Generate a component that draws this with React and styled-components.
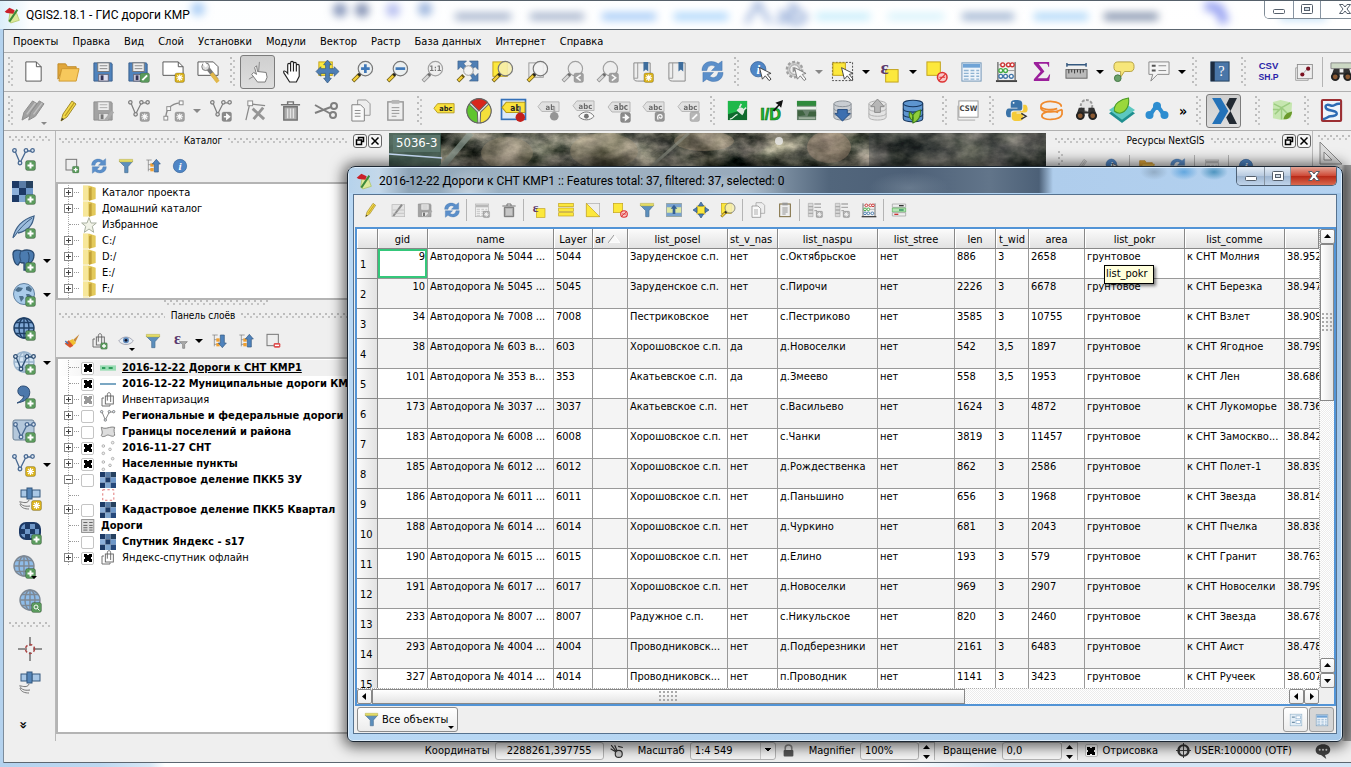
import React from "react";
import styled, { createGlobalStyle, css } from "styled-components";

const UI = `"DejaVu Sans Condensed", "DejaVu Sans", sans-serif`;
const TITLE = `Roboto, "Open Sans", sans-serif`;

const Global = createGlobalStyle`
  * { box-sizing: border-box; }
  html, body { margin: 0; padding: 0; }
  body { font-family: ${UI}; font-size: 11px; line-height: 14px; color: #000; overflow: hidden; background: #fff; }
  button, input, select { font-family: inherit; font-size: inherit; line-height: inherit; color: inherit; margin: 0; }
`;

/* ---------- icon drawings, 24 x 24 ---------- */

const Badge = ({ x = 13, y = 13, fill = "#5a9a5c", kind = "plus" }) => (
  <g transform={`translate(${x} ${y})`}>
    <rect x=".5" y=".5" width="10" height="10" rx="2" fill={fill} stroke="#0003" />
    {kind === "plus" && <path d="M5.5 2.5v6M2.5 5.5h6" stroke="#fff" strokeWidth="2" />}
    {kind === "star" && <path d="M5.5 2v7M2 5.5h7M3 3l5 5M8 3l-5 5" stroke="#fff" strokeWidth="1.2" />}
    {kind === "arrow" && <path d="M2.5 5.5h4M5.5 3l3 2.5-3 2.5z" stroke="#fff" strokeWidth="1.4" fill="#fff" />}
    {kind === "left" && <path d="M7.500 2.500l-4 3 4 3" stroke="#fff" strokeWidth="1.600" fill="none" />}
    {kind === "right" && <path d="M3.500 2.500l4 3-4 3" stroke="#fff" strokeWidth="1.600" fill="none" />}
    {kind === "pen" && <path d="M3 8l5-5" stroke="#fff" strokeWidth="2" />}
    {kind === "rot" && <path d="M4 8.500c-3-5 4-7 4-3 0 2-3 2-3 0" stroke="#fff" strokeWidth="1.300" fill="none" />}
    {kind === "find" && <><circle cx="5" cy="5" r="2" stroke="#fff" fill="none" /><path d="M6.500 6.500l2 2" stroke="#fff" /></>}
  </g>
);
const Star = (p) => <Badge fill="#d9b21c" kind="star" {...p} />;
const Lens = ({ fill = "#e8eef0aa", children }) => (
  <>
    <path d="M2 22l7-7" stroke="#6b5a12" strokeWidth="4" />
    <path d="M2.500 21.500l5-5" stroke="#f4cf3a" strokeWidth="2.400" />
    <path d="M8 16l2-2" stroke="#222" strokeWidth="3" />
    <circle cx="15" cy="9" r="7.500" fill={fill} stroke="#777" strokeWidth="1.200" />
    {children}
  </>
);
const Nodes = ({ x = 0, y = 0, c = "#4a6a92" }) => (
  <g transform={`translate(${x} ${y})`} stroke={c} fill="#dfe8f2" strokeWidth="1.300">
    <path d="M3 4l5 12 6-12h6" fill="none" />
    <circle cx="2.500" cy="3.500" r="1.800" /><circle cx="8" cy="16" r="1.800" />
    <circle cx="14" cy="3.500" r="1.800" /><circle cx="20.500" cy="3.500" r="1.800" />
  </g>
);
const Tag = ({ y = 4, t = "abc" }) => (
  <>
    <path d={`M1 ${y + 5}l4-5h18v10h-18z`} fill="#fbe23c" stroke="#b59a1c" />
    <text x="14" y={y + 8} textAnchor="middle" fontSize="8" fontWeight="700" fill="#222">{t}</text>
  </>
);
const Cursor = ({ x = 11, y = 8 }) => (
  <path transform={`translate(${x} ${y})`} d="M0 0l3 12 3-3.500 4 5 2-1.500-4-5 4-1z" fill="#fff" stroke="#444" />
);
const Disk = () => (
  <>
    <path d="M2 3h18l1 1v18H2z" fill="#4f83bd" stroke="#3a5f8c" />
    <rect x="6" y="3" width="12" height="9" fill="#eee" stroke="#777" /><path d="M8 6h8M8 9h8" stroke="#888" />
    <rect x="7" y="15" width="10" height="7" fill="#dde" stroke="#667" /><rect x="9" y="16" width="3" height="5" fill="#335" />
  </>
);
const PencilShape = ({ x = 0 }) => (
  <g transform={`translate(${x} 0)`}>
    <path d="M4 22l2-7 9-13 4 3-9 13z" fill="#f3d94a" stroke="#a08a2c" />
    <path d="M8 17l9-13" stroke="#b8991e" strokeWidth="1.300" /><path d="M4 22l1-3 2 1z" fill="#333" />
  </g>
);
const DarkPencil = ({ x = 0 }) => (
  <g transform={`translate(${x} 0)`}>
    <path d="M3 22l2-8 9-12 5 3-9 13z" fill="#777" stroke="#555" />
    <path d="M8 16l9-12" stroke="#aaa" strokeWidth="1.500" />
  </g>
);
const Book = () => (
  <><path d="M3 3h17v19H7c-3 0-4-1-4-3z" fill="#eee" stroke="#888" /><path d="M7 3v16H3" fill="none" stroke="#999" /><path d="M13 2h5v10l-2.500-2-2.500 2z" fill="#3e6d9c" /></>
);
const Checker = ({ s = 8, x = 0, y = 0 }) => {
  const tone = ["#1d3a66", "#5a7ca6", "#26415f", "#8db0da", "#1d3a66", "#6e97c8", "#1d3a66", "#7fa6d0", "#26497c"];
  return tone.map((c, i) => <rect key={i} x={x + (i % 3) * s} y={y + Math.floor(i / 3) * s} width={s} height={s} fill={c} />);
};
const Globe = ({ fill = "#a9cbe9", c = "#4c7199" }) => (
  <g fill="none" stroke={c} strokeWidth="1.400">
    <circle cx="12" cy="11" r="10" fill={fill} />
    <ellipse cx="12" cy="11" rx="5" ry="10" /><path d="M12 1v20M2 11h20M4 5.500h16M4 16.500h16" />
  </g>
);
const Drum = ({ c = "#8a9097", l = "#ddd" }) => (
  <g fill={l} stroke={c}>
    <path d="M3 5v14c0 4 18 4 18 0V5" /><path d="M3 10c0 4 18 4 18 0M3 15c0 4 18 4 18 0" fill="none" /><ellipse cx="12" cy="5" rx="9" ry="3" />
  </g>
);
const Binoc = () => (
  <>
    <path d="M4 9h6v4h4V9h6l3 9H14v-3h-4v3H1z" fill="#333" />
    <circle cx="5.500" cy="17.500" r="4.500" fill="#222" /><circle cx="18.500" cy="17.500" r="4.500" fill="#222" />
    <circle cx="5.500" cy="17.500" r="2.500" fill="#8b5a33" /><circle cx="18.500" cy="17.500" r="2.500" fill="#8b5a33" />
  </>
);
const Sheet = ({ head = "#6fa3d6", line = "#8fb3d2" }) => (
  <><rect x="2" y="3" width="20" height="19" fill="#eef4fa" stroke="#6f94b5" /><rect x="3" y="4" width="18" height="4" fill={head} />
    <path d="M4 11h5M11 11h4M17 11h3M4 14h5M11 14h4M17 14h3M4 17h5M11 17h4M17 17h3M4 20h5M11 20h4M17 20h3" stroke={line} strokeWidth="1.400" /></>
);
const Epsilon = ({ x = 7, y = 15, s = 20 }) => <text x={x} y={y} textAnchor="middle" fontFamily="Liberation Serif" fontSize={s} fontWeight="700" fill="#5b3a6e">ε</text>;
const NoEntry = () => <><circle cx="18" cy="18" r="5" fill="#f8c8c8" stroke="#d33" strokeWidth="1.600" /><path d="M14.500 21.500l7-7M15 18h6" stroke="#d33" strokeWidth="1.300" /></>;
const YSquare = ({ x = 2, y = 2, w = 14 }) => <rect x={x} y={y} width={w} height={w} fill="#fce83c" stroke="#c2a21a" />;
const Satellite = () => (
  <g fill="#a8c7e6" stroke="#34587f"><rect x="3" y="3" width="6" height="7" /><rect x="14" y="3" width="8" height="7" /><rect x="9" y="1" width="5" height="11" fill="#5585b8" />
    <path d="M11 13c-1 3-4 3-8 2M2 14c0 4 4 6 10 5M2 17c1 4 5 5 9 5" fill="none" stroke="#777" /></g>
);
const Page = ({ d = "M4 2h11l5 5v15H4z" }) => <><path d={d} fill="#fff" stroke="#555" /><path d="M15 2v5h5" fill="none" stroke="#555" /></>;
const Clip = () => <><rect x="4" y="3" width="16" height="19" fill="#eee" stroke="#7c6a3c" strokeWidth="1.500" /><rect x="8" y="1" width="8" height="4" fill="#999" /><path d="M8 9h8M8 12h8M8 15h8M8 18h5" stroke="#666" /></>;
const Refresh = () => (
  <g fill="#5b8fca" stroke="#3f6fa8" strokeWidth=".500"><path d="M1 11C1 2 11-1 18 4l4-3v10H11l4-4c-4-3-8-1-9 4z" /><path d="M23 13c0 9-10 12-17 7l-4 3V13h11l-4 4c4 3 8 1 9-4z" /></g>
);
const Funnel = () => <><path d="M2 5h20l-7 8v9h-5v-9z" fill="#5c8fbd" stroke="#4a6f92" /><path d="M2 2h20v4H2z" fill="#e3dc66" stroke="#a8a040" strokeWidth=".600" /></>;
const Info = () => <><circle cx="12" cy="12" r="10" fill="#4f86c6" stroke="#356299" /><text x="12" y="18" textAnchor="middle" fontFamily="Liberation Serif" fontStyle="italic" fontWeight="700" fontSize="17" fill="#fff">i</text></>;
const Abacus = () => (
  <><path d="M3 2v19M21 2v19" stroke="#777" strokeWidth="1.500" /><path d="M1 22h22" stroke="#444" strokeWidth="2" />
    <path d="M3 5h18M3 11h18M3 17h18" stroke="#999" />
    <g fill="#fff" strokeWidth="1.400"><g stroke="#c33"><circle cx="8" cy="5" r="2" /><circle cx="14" cy="5" r="2" /><circle cx="18" cy="5" r="2" /></g>
      <g stroke="#4a4"><circle cx="6" cy="11" r="2" /><circle cx="11" cy="11" r="2" /></g>
      <g stroke="#47a"><circle cx="6" cy="17" r="2" /><circle cx="11" cy="17" r="2" /><circle cx="17" cy="17" r="2" /></g></g></>
);
const Arrows4 = () => <path d="M12 0l4 5h-2v4h5V7l5 5-5 5v-3h-5v5h2l-4 5-4-5h2v-5H5v3l-5-5 5-5v2h5V5H8z" fill="#4f7fb5" stroke="#2c527d" strokeWidth=".700" />;
const Group = () => <g fill="none" stroke="#666" strokeWidth="1.400"><rect x="8" y="6" width="12" height="12" /><path d="M6 9H3v12h12v-2" /><path d="M11 13V4c0-4 5-4 5 0v11" /></g>;
const TreeIco = ({ up }) => (
  <><path d="M2 3h8M5 3v17M5 10h4M5 17h4" stroke="#777" fill="none" /><rect x="8" y="8" width="5" height="5" fill="#f0a030" /><rect x="8" y="15" width="5" height="5" fill="#f0a030" />
    <path d={up ? "M17 2l6 7h-3v12h-6V9h-3z" : "M17 22l6-7h-3V3h-6v12h-3z"} fill="#4f83bd" stroke="#34587f" /></>
);

const ICONS = {
  newDoc: <Page />,
  open: <><path d="M1 4h8l2 3h9v4H5L1 20z" fill="#e0a63a" stroke="#c08a28" /><path d="M5 9h18l-3 13H2z" fill="#f7c85c" stroke="#d09a30" /></>,
  save: <Disk />,
  saveAs: <><Disk /><Badge kind="pen" /></>,
  composer: <><path d="M1 2h16l5 5v9H1z" fill="#fff" stroke="#555" /><path d="M17 2v5h5" fill="none" stroke="#555" /><Star /></>,
  composers: <><path d="M1 2h16l5 5v9H1z" fill="#fff" stroke="#555" /><path d="M10 7l11 14" stroke="#777" strokeWidth="4" /><path d="M15 14l7 9" stroke="#e2b84a" strokeWidth="4" /><circle cx="9" cy="7" r="4" fill="#ddd" stroke="#777" /><path d="M7 3l3 4" stroke="#fff" strokeWidth="3" /></>,
  touch: <><path d="M3 20l10-6 1-12" stroke="#888" fill="none" /><path d="M9 8l2 7-3-2-2 2 6 8h8l2-5-1-5-9-1-1-6z" fill="#fff" stroke="#777" /></>,
  hand: <path d="M7 14V5c0-2 3-2 3 0V3c0-2 3-2 3 0v1c0-2 3-2 3 0v2c0-2 3-2 3 0v11l-3 6H9l-5-8c-3-4 0-5 3-1zM10 5v7M13 4v8M16 6v6" fill="#fff" stroke="#222" strokeWidth="1.200" />,
  pan: <><YSquare x={3} y={2} w={14} /><Arrows4 /></>,
  zoomIn: <Lens><path d="M15 4.500v9M10.500 9h9" stroke="#3f78b8" strokeWidth="2.800" /></Lens>,
  zoomOut: <Lens><path d="M10 9h10" stroke="#3f78b8" strokeWidth="2.800" /></Lens>,
  zoomOne: <Lens><text x="15" y="12" fontSize="8" fontWeight="700" textAnchor="middle" fill="#333">1:1</text></Lens>,
  zoomFull: <><path d="M2 1h9L8 4l3 3-3 3-3-3-3 3zM23 1v9l-3-3-4 3-2-3 3-3-3-3zM23 22h-9l3-3-2-3 3-2 2 3 3-3z" fill="#4f7fb5" stroke="#34587f" strokeWidth=".600" />
    <path d="M2 22l6-6" stroke="#6b5a12" strokeWidth="4" /><path d="M2.500 21.500l4-4" stroke="#f4cf3a" strokeWidth="2.400" /><circle cx="13" cy="11" r="5" fill="#f2f2f2" stroke="#999" /></>,
  zoomSel: <><YSquare x={2} y={2} w={15} /><Lens fill="#f6efb0dd" /></>,
  zoomLayer: <><rect x="3" y="3" width="15" height="15" fill="#eee" stroke="#999" /><Lens fill="#f2f2f2dd" /></>,
  zoomLast: <><Lens /><Badge kind="left" fill="#777" /></>,
  zoomNext: <><Lens /><Badge kind="right" fill="#777" /></>,
  bookNew: <><Book /><Star /></>,
  book: <Book />,
  refresh: <Refresh />,
  identify: <><g transform="scale(.8)"><Info /></g><Cursor /></>,
  action: <><circle cx="11" cy="10" r="8" fill="#bbb" stroke="#777" strokeWidth="2.500" strokeDasharray="3 2" /><circle cx="11" cy="10" r="5" fill="#eee" stroke="#777" /><path d="M9 7l5 3-5 3z" fill="#666" /><Cursor /></>,
  select: <><rect x="1.500" y="2.500" width="21" height="19" fill="none" stroke="#444" strokeDasharray="2 1.500" /><YSquare x={2} y={3} w={13} /><Cursor /></>,
  exprSelect: <><YSquare x={8} y={10} w={13} /><Epsilon /></>,
  deselect: <><YSquare /><NoEntry /></>,
  table: <Sheet />,
  abacus: <Abacus />,
  sigma: <path d="M4 2h16v5h-1c0-3-2-3-4-3H9l6 8-7 7h8c2 0 3-1 4-4h1l-1 7H4v-2l7-8-7-8z" fill="#9b1f9b" />,
  ruler: <><path d="M2 5h20M2 3v4M22 3v4" stroke="#34587f" strokeWidth="1.500" /><rect x="1" y="10" width="22" height="9" fill="#bbb" stroke="#666" /><path d="M4 10v4M7 10v3M10 10v4M13 10v3M16 10v4M19 10v3" stroke="#333" /></>,
  tip: <><path d="M6 2h13c3 0 4 2 4 5s-1 5-4 5h-6l-4 6v-6H6c-3 0-4-2-4-5s1-5 4-5z" fill="#f7e67a" stroke="#b5a040" /><circle cx="6" cy="19" r="3.500" fill="#6aa06a" stroke="#467846" /></>,
  annot: <><path d="M2 2h21v13H11l-7 7 2-7H2z" fill="#f5f5f5" stroke="#888" /><path d="M5 6h4M5 11h4" stroke="#555" strokeWidth="2" /><path d="M12 6h8M12 11h8" stroke="#888" /></>,
  help: <><rect x="3" y="2" width="19" height="20" fill="#4a76a8" stroke="#24405f" /><rect x="3" y="2" width="4" height="20" fill="#1d2c40" /><text x="14" y="17" fontFamily="Liberation Serif" fontSize="15" textAnchor="middle" fill="#fff">?</text></>,
  csvshp: <><text x="12" y="9" fontSize="10" textAnchor="middle" fill="#2a1fa8" fontFamily="Liberation Sans" fontWeight="700">CSV</text><text x="12" y="21" fontSize="9" textAnchor="middle" fill="#2a1fa8" fontFamily="Liberation Sans" fontWeight="700">SH.P</text></>,
  scatter: <><path d="M4 7H2v15h15v-2" fill="none" stroke="#999" /><rect x="4" y="3" width="18" height="17" fill="#eee" stroke="#888" /><path d="M10 15l6-7" stroke="#999" /><circle cx="10" cy="15" r="2.500" fill="#7a1020" /><circle cx="17" cy="8" r="2.500" fill="#7a1020" /></>,
  binoc: <><path d="M1 3h22v6H1z" fill="#ccd8c4" stroke="#888" /><Binoc /></>,
  pens: <><DarkPencil x={-3} /><DarkPencil x={4} /></>,
  pencil: <PencilShape />,
  savePen: <><Disk /><path d="M14 22l8-9" stroke="#888" strokeWidth="3" /></>,
  addFeat: <><Nodes x={1} c="#444" /><Badge kind="star" fill="#777" /></>,
  curve: <><path d="M4 20C4 10 9 5 19 4" fill="none" stroke="#555" strokeWidth="1.400" /><rect x="2" y="18" width="4" height="4" fill="#fff" stroke="#555" /><rect x="5" y="8" width="4" height="4" fill="#fff" stroke="#555" /><rect x="18" y="2" width="4" height="4" fill="#fff" stroke="#555" /><Badge kind="star" fill="#777" /></>,
  moveFeat: <><Nodes x={1} c="#444" /><Badge kind="arrow" fill="#555" /></>,
  node: <><path d="M2 22L6 5l16 2" fill="none" stroke="#555" strokeWidth="1.300" /><rect x="4" y="2" width="5" height="5" fill="#fff" stroke="#555" /><path d="M9 10l12 11M20 9L10 21" stroke="#666" strokeWidth="3" /></>,
  trash: <g fill="none" stroke="#333" strokeWidth="1.500"><path d="M2 6h20M9 6V3h6v3" /><path d="M5 8h14v14H5z" fill="#888" /><path d="M9 10v10M12 10v10M15 10v10" stroke="#ddd" /></g>,
  cut: <g stroke="#444" fill="none" strokeWidth="2"><path d="M1 6l16 9M1 14l16-6" /><circle cx="19" cy="16" r="3" /><circle cx="20" cy="7" r="3" /></g>,
  copy: <><path d="M9 1h9l4 4v12H9z" fill="#eee" stroke="#666" /><path d="M3 6h9l4 4v13H3z" fill="#fff" stroke="#444" /><path d="M6 12h6M6 15h6M6 18h6" stroke="#555" /></>,
  paste: <Clip />,
  label: <Tag />,
  pie: <g stroke="#666"><circle cx="12" cy="12" r="11" fill="#fff" /><path d="M12 12L4 4a11 11 0 0 1 16 0z" fill="#d9261c" /><path d="M13.500 13L21 5.500A11 11 0 0 1 13 23z" fill="#f4e03a" /><path d="M10.500 13L3 5.500A11 11 0 0 0 11 23z" fill="#5fc52e" /></g>,
  labelPin: <><rect x="0.500" y="1.500" width="23" height="19" fill="#dce9f8" stroke="#3470b8" strokeWidth="1.600" /><Tag t="ab" /><path d="M18 8v9" stroke="#888" strokeWidth="2" /><circle cx="18.500" cy="18.500" r="4.500" fill="#c4201c" /></>,
  labelPin2: <><Tag y={3} t="ab" /><path d="M18 8v9" stroke="#888" strokeWidth="2" /><circle cx="18" cy="18" r="4.500" fill="#666" /></>,
  labelEye: <><Tag y={2} /><path d="M7 18c4-6 12-6 16 0-4 5-12 5-16 0z" fill="#fff" stroke="#333" /><circle cx="15" cy="18" r="2.500" fill="#333" /></>,
  labelMove: <><Tag y={3} /><Badge kind="arrow" fill="#555" /></>,
  labelRot: <><Tag y={3} /><Badge kind="rot" fill="#666" /></>,
  labelEdit: <><Tag y={3} /><Badge kind="pen" fill="#999" /></>,
  plug: <><rect x="2" y="2" width="20" height="20" fill="#0f6b2d" /><path d="M2 2h20v8L2 16z" fill="#1eb84a" /><path d="M4 21c4 0 4-4 8-5" stroke="#eaf5ea" strokeWidth="1.300" fill="none" /><path d="M11 12l6 5c2-2 3-5 1-7s-5-1-7 2z" fill="#dfe8e0" /><path d="M14 9l2-4M18 12l3-3" stroke="#dfe8e0" strokeWidth="1.600" /></>,
  id: <><text x="10" y="22" textAnchor="middle" fontFamily="Liberation Sans" fontSize="17" fontWeight="700" fill="#1db52e" stroke="#0c6b18" strokeWidth=".600">I/D</text><path d="M12 12l6-6-3-2 8-3-2 8-2-2-5 6z" fill="#111" /></>,
  train: <><rect x="1" y="2" width="20" height="20" fill="#67806b" /><path d="M1 2h20v5H1z" fill="#2f8b3c" /><path d="M1 8h20v3H1z" fill="#e8efe8" /><path d="M2 12h5l3 5-8 1zM14 13h7v5h-9z" fill="#3f6340" /><path d="M3 19h17v2H3z" fill="#9db09d" /></>,
  dbDown: <><Drum l="#c9cdd2" /><path d="M7 11h10v4h3l-8 8-8-8h3z" fill="#3d6fb0" stroke="#244a7d" /></>,
  dbUp: <><Drum /><path d="M12 0l7 8h-4v6H9V8H5z" fill="#999" stroke="#555" /></>,
  dbLeaf: <><Drum c="#16355c" l="#5d95cf" /><path d="M12 23c-2-8 2-11 7-12 0 7-2 10-7 12zM12 21c-4-2-4-6-3-8 3 2 4 4 3 8z" fill="#8fce3a" stroke="#3d7a1c" /></>,
  csw: <><path d="M2 7v15h18" fill="none" stroke="#aaa" /><rect x="3" y="2" width="20" height="17" fill="#fff" stroke="#999" /><text x="13" y="13" fontSize="8" fontWeight="700" textAnchor="middle" fill="#444">CSW</text></>,
  python: <><path d="M12 1c-5 0-6 1-6 5v3h7v1H4c-4 0-4 9 0 9h2v-4c0-3 2-3 4-3h5c2 0 3-1 3-3V5c0-3-2-4-6-4z" fill="#3b73a8" /><path d="M13 23c5 0 6-1 6-5v-3h-7v-1h9c4 0 3-8 0-8h-2v4c0 3-2 3-4 3h-5c-2 0-3 1-3 3v3c0 3 2 4 6 4z" fill="#f5cb3a" /><circle cx="9" cy="4" r="1" fill="#fff" /><path d="M17 15l5 3-5 3" fill="none" stroke="#333" strokeWidth="1.500" /></>,
  rings: <g fill="none" stroke="#f08a2c" strokeWidth="1.800"><path d="M22 8c2-6-20-8-21-1-1 4 10 5 17 3M1 7v3c1 4 14 5 22 1M23 11v5c-2 7-22 7-21 1 1-4 12-5 17-3" /></g>,
  binocGear: <><circle cx="12" cy="7" r="6" fill="#e4e4e4" stroke="#999" strokeDasharray="3 1.500" strokeWidth="2" /><Binoc /></>,
  leafBox: <><path d="M12 6l12 8-12 9-12-9z" fill="#1f8f8f" /><path d="M12 3l12 8-12 9L0 11z" fill="#5cc8c0" /><path d="M5 12C4 5 11 1 18 0c1 7-2 13-8 14-2 0-4-1-5-2z" fill="#9ad83c" stroke="#4a9a28" /></>,
  share: <><path d="M5 16l7-10 7 10" stroke="#2d8dd0" strokeWidth="4" fill="none" /><circle cx="12" cy="7" r="4" fill="#2d8dd0" /><circle cx="4.500" cy="16" r="4" fill="#2d8dd0" /><circle cx="19.500" cy="16" r="4" fill="#2d8dd0" /></>,
  bigX: <><path d="M1 0h8l7 12-7 12H1l7-12z" fill="#2472b8" /><path d="M24 0h-7l-3 6 4 6-4 6 3 6h7l-6-12z" fill="#222a33" /></>,
  greenMap: <><path d="M2 3l8-2 12 3-1 16-10 2-9-2z" fill="#c6e6b0" /><path d="M3 5l8 4 9-5M4 16l7-7 9 9M11 9v12M2 11h6" stroke="#9ccc80" strokeWidth="1.500" fill="none" /><path d="M13 21c1-5 4-7 9-8 0 5-4 9-9 8z" fill="#6b9a2c" /></>,
  route: <><rect x="2" y="1" width="20" height="22" rx="1" fill="#eef4fb" stroke="#9c2f33" strokeWidth="2.200" /><path d="M21 5c-5-1-6 3-9 2S5 5 6 9s9 2 11 5-3 4-6 4-4 3-8 3" fill="none" stroke="#2c6ab4" strokeWidth="2.600" /></>,
  addVector: <><Nodes /><Badge /></>,
  addRaster: <><Checker s={7} /><Badge /></>,
  feather: <><path d="M1 23C3 13 9 5 22 1c-1 9-6 15-16 17" fill="#9dbddd" stroke="#3d5f86" strokeWidth="1.300" /><path d="M2 22C7 14 13 8 20 3" fill="none" stroke="#3d5f86" /><Badge /></>,
  elephant: <><path d="M1 5c0-5 6-4 9-3 5-2 12-1 12 4 0 4-2 8-5 8l-1 7h-4v-7c-2 0-3 0-4-1l-2 3c-3 0-5-6-5-11z" fill="#4c7cb0" stroke="#294a70" strokeWidth="1.300" /><path d="M9 2c-2 4-1 8 0 10M16 3c2 4 1 8 0 11" fill="none" stroke="#294a70" /><Badge /></>,
  wms: <><circle cx="12" cy="11" r="10.500" fill="#a9cbe9" stroke="#5f7fa0" /><path d="M3 7l3-3 5 1-2 3-3 1-2-1zM14 4l3-1 3 3-1 3-5-2zM7 13l4 0 1 2-3 4-1-3zM14 11l3 0 3 2-3 4-2-3z" fill="#4c6f8c" /><Badge /></>,
  wcs: <><Globe fill="#7fa8d6" c="#1f3f66" /><Badge /></>,
  wfs: <><Globe fill="#d6e6f4" c="#9ab4cc" /><Nodes x={1} y={2} c="#2f4f74" /><Badge /></>,
  comma: <><path d="M11 1c6 0 8 5 6 10-2 4-6 6-12 7 4-2 6-4 7-7-8 1-8-10-1-10z" fill="#4c78ab" stroke="#2c4c74" /><Badge /></>,
  virtual: <><rect x="1" y="1" width="21" height="20" rx="2" fill="#b4c8dc" stroke="#6d8296" /><Nodes x={1} y={2} /><Badge /></>,
  newVector: <><Nodes /><Star /></>,
  sat: <Satellite />,
  satStar: <><Satellite /><Star /></>,
  rasterAdd: <><rect x="2" y="2" width="20" height="16" rx="6" fill="#6e97c8" stroke="#1d3a66" strokeWidth="2" /><path d="M7 3h5v5H7zM12 8h5v5h-5zM7 13h5v4H7zM3 8h4v5H3zM17 3h4v5h-4z" fill="#1d3a66" /><Badge /></>,
  globeAdd: <><Globe fill="#8fbce8" c="#7d8894" /><Badge /></>,
  globeFind: <><Globe fill="#8fbce8" c="#7d8894" /><Badge kind="find" /></>,
  cross: <><path d="M12 0v9M12 15v9M0 12h9M15 12h9" stroke="#333" /><circle cx="12" cy="12" r="4.500" fill="none" stroke="#a44" strokeDasharray="3 2" strokeWidth="1.500" /></>,
  addSel: <><rect x="3" y="2" width="16" height="16" fill="#eee" stroke="#777" strokeWidth="1.500" /><Badge x={12} y={12} /></>,
  remove: <><rect x="3" y="2" width="17" height="17" fill="#eee" stroke="#777" strokeWidth="1.500" /><rect x="13" y="15" width="10" height="7" rx="2" fill="#e05050" /><path d="M15 18.500h6" stroke="#fff" strokeWidth="2" /></>,
  funnel: <Funnel />,
  treeUp: <TreeIco up />,
  treeDown: <TreeIco />,
  info: <Info />,
  brush: <><path d="M23 2l-9 8 3 4z" fill="#c88a3a" /><path d="M13 9l5 6-5 4-6-7z" fill="#f0c030" /><path d="M7 11l7 8-5 3-8-6z" fill="#d8542c" /><path d="M2 12l4 4" stroke="#3f78b8" strokeWidth="2" /></>,
  groupAdd: <><Group /><Badge x={14} y={14} /></>,
  group: <Group />,
  eye: <><path d="M1 12c6-8 16-8 22 0-6 7-16 7-22 0z" fill="#e8eef4" stroke="#889" /><circle cx="12" cy="11" r="4.500" fill="#5c88bb" /><circle cx="12" cy="11" r="2" fill="#112" /></>,
  epsFilter: <><Epsilon x={8} y={16} s={24} /><path d="M11 13h12l-4 4v6h-3v-6z" fill="#aaa" stroke="#777" /></>,
  checker: <Checker />,
  line: <path d="M0 12h24" stroke="#3a7ca5" strokeWidth="2" />,
  greenLine: <><path d="M0 12h24" stroke="#9adcb4" strokeWidth="8" /><path d="M3 12h5M13 12h6" stroke="#2f9e5c" strokeWidth="3" /></>,
  vnodes: <Nodes c="#777" y={2} />,
  polygon: <path d="M2 5c8 4 12-2 20 0-2 5 0 8 0 12-4 4-8-2-12 0-3 2-8 3-8 0 3-5 0-8 0-12z" fill="#ddd" stroke="#777" strokeWidth="1.400" />,
  points: <g fill="#eee" stroke="#999"><circle cx="19" cy="4" r="2" /><circle cx="5" cy="9" r="2" /><circle cx="15" cy="14" r="2" /><circle cx="5" cy="20" r="2" /></g>,
  redBox: <rect x="3" y="3" width="19" height="18" fill="none" stroke="#d66" strokeDasharray="4 4" strokeWidth="1.500" />,
  grayTable: <><rect x="1" y="1" width="21" height="22" fill="#ddd" stroke="#888" strokeWidth="1.500" /><path d="M4 6h7M14 6h6M4 11h7M14 11h6M4 15h7M14 15h6M4 19h7M14 19h6" stroke="#555" strokeWidth="1.500" /></>,
  folder: <><path d="M3 1h10l9 3v17l-4 1-3 1H3z" fill="#e3c95a" /><path d="M3 1h8v22H3z" fill="#f7e79a" /><path d="M12 5l4-2v19l-4 2z" fill="#c2a23a" /></>,
  starOff: <path d="M12 1l3 8h8l-6 5 2 9-7-5-7 5 2-9-6-5h8z" fill="#f1f3e8" stroke="#a9b0a0" strokeWidth="1.500" />,
  editSheet: <><rect x="3" y="4" width="19" height="18" fill="#ddd" stroke="#999" /><path d="M5 21L18 4" stroke="#555" strokeWidth="3" /><path d="M4 12h17M4 17h17" stroke="#999" /></>,
  rows: <g fill="#fce83c" stroke="#c2a21a"><rect x="1" y="2" width="22" height="5" /><rect x="1" y="9" width="22" height="5" /><rect x="1" y="16" width="22" height="5" /></g>,
  invert: <><rect x="2" y="2" width="20" height="20" fill="#eee" stroke="#aaa" /><path d="M2 2v20h20z" fill="#fce83c" stroke="#c2a21a" /></>,
  moveTop: <><rect x="1" y="2" width="22" height="20" fill="#dce6a0" stroke="#789" /><path d="M1 3h22v5H1zM1 16h22v5H1z" fill="#79a3cf" /><path d="M12 4l5 6h-3v8h-4v-8H7z" fill="#335f94" /></>,
  panGrid: <><YSquare x={6} y={6} w={12} /><path d="M12 0l4 6H8zM12 24l4-6H8zM0 12l6-4v8zM24 12l-6-4v8z" fill="#4f7fb5" stroke="#2c527d" /></>,
  colAdd: <><path d="M2 2h7v20H2z" fill="#ccc" stroke="#888" /><path d="M2 7h7M2 12h7M2 17h7M11 3h10M11 8h10M11 13h4" stroke="#888" strokeWidth="2" /><Badge kind="star" fill="#888" /></>,
  tableStar: <><Sheet /><Badge kind="star" fill="#888" /></>,
  cond: <><path d="M2 3h20v5H2z" fill="#eee" stroke="#999" /><path d="M12 5.500h7" stroke="#333" strokeWidth="2" /><path d="M2 9h20v6H2z" fill="#b4e4b4" stroke="#5a5" /><path d="M12 12h7" stroke="#285" strokeWidth="2" /><path d="M2 16h20v5H2z" fill="#eee" stroke="#999" /><path d="M5 18.500h6" stroke="#c33" strokeWidth="2" /></>,
  form: <><rect x="2" y="2" width="20" height="20" fill="#e4eef6" stroke="#8fb0c8" /><path d="M5 7h5M5 16h5" stroke="#7090a8" strokeWidth="2" /><rect x="12" y="5" width="8" height="5" fill="#fff" stroke="#7da5c8" /><rect x="12" y="13" width="8" height="5" fill="#fff" stroke="#7da5c8" /></>,
  app: <><path d="M9 8l9-1 5 13-13 4-3-3z" fill="#dcea9a" stroke="#a8bf58" /><path d="M8 22L20 4" stroke="#3c8a3c" strokeWidth="3" /><path d="M1 7l7-6 8 4-2 5-10-1z" fill="#c9202a" /></>,
  mouse: <g stroke="#333" fill="none" strokeWidth="2"><ellipse cx="15" cy="17" rx="6" ry="6" fill="#ccc" /><path d="M2 2l9 11M8 2l4 9M1 8l8 5M14 4l8 2" /></g>,
  lock: <><path d="M6 12V7c0-7 12-7 12 0v5" fill="none" stroke="#888" strokeWidth="3" /><rect x="3" y="11" width="18" height="12" rx="2" fill="#555" /></>,
  crs: <><circle cx="12" cy="12" r="8.500" fill="#ddd" stroke="#333" strokeWidth="3" /><path d="M12 0v24M0 12h24M7 5c-2 5-2 9 0 14M17 5c2 5 2 9 0 14" stroke="#333" fill="none" strokeWidth="1.500" /></>,
  chat: <><path d="M12 2c14 0 14 15 3 16l2 6-8-6C-3 17-1 2 12 2z" fill="#444" /><circle cx="7" cy="10" r="1.500" fill="#ddd" /><circle cx="12" cy="10" r="1.500" fill="#ddd" /><circle cx="17" cy="10" r="1.500" fill="#ddd" /></>,
  setSquare: <><path d="M2 1v22h22z" fill="#ddd" stroke="#888" /><path d="M6 11v8h8z" fill="#f0f0f0" stroke="#888" /></>,
};

const Svg = styled.svg`
  display: block;
  flex: none;
  overflow: visible;
  width: ${(p) => p.$s}px;
  height: ${(p) => p.$s}px;
  font-family: ${UI};
  ${(p) => p.$dim && css`filter: grayscale(1); opacity: 0.65;`}
`;
const Icon = ({ n, s = 24, dim }) => <Svg viewBox="0 0 24 24" $s={s} $dim={dim} aria-hidden="true">{ICONS[n]}</Svg>;

/* ---------- shared parts ---------- */

const gripDots = css`
  background: radial-gradient(circle at 1px 1px, #bcbcbc 1px, transparent 1px) 0 0 / 6px 6px,
    radial-gradient(circle at 4px 4px, #c4c4c4 1px, transparent 1px) 0 0 / 6px 6px;
`;
const GripV = styled.span`
  flex: none;
  width: ${(p) => p.$w || 14}px;
  height: 30px;
  padding: 0 4px;
  &::before {
    content: "";
    display: block;
    width: 6px;
    height: 100%;
    ${gripDots}
  }
`;
const GripH = styled.span`
  flex: ${(p) => (p.$w ? "none" : "1")};
  width: ${(p) => (p.$w ? p.$w + "px" : "auto")};
  height: 6px;
  ${gripDots}
`;
const Caret = styled.span`
  flex: none;
  width: 0;
  height: 0;
  border: ${(p) => p.$s || 4}px solid transparent;
  border-bottom-width: 0;
  border-top-color: ${(p) => (p.$dim ? "#888" : "#000")};
`;
const ToolButton = styled.button`
  display: flex;
  align-items: center;
  justify-content: center;
  flex: none;
  position: relative;
  width: ${(p) => p.$w || 35}px;
  height: ${(p) => p.$h || 34}px;
  padding: 0;
  background: none;
  border: 1px solid transparent;
  border-radius: 3px;
  ${(p) => p.$on && css`background: linear-gradient(#cfcfcf, #dedede); border-color: #7c7c7c;`}
`;
const ArrowButton = styled.button`
  display: flex;
  align-items: center;
  justify-content: center;
  flex: none;
  width: 12px;
  height: 24px;
  padding: 0;
  border: 0;
  background: none;
`;
const CornerCaret = styled(Caret)`
  position: absolute;
  right: 3px;
  bottom: 2px;
`;
const Separator = styled.span`
  flex: none;
  width: 1px;
  height: ${(p) => p.$h || 30}px;
  margin: 0 1px;
  background: #b4b4b4;
`;

/* ---------- main window ---------- */

const Frame = styled.div`
  position: relative;
  display: flex;
  flex-direction: column;
  min-height: 100vh;
  padding: 0 0 4px 4px;
  overflow: hidden;
  border-top: 1px solid #55606a;
  background: linear-gradient(90deg, #b4d2ee 0, #bdd8f0 100px, #d8e8f6 150px, #fff 165px, #fff 900px, #d4e6f6 1000px);
`;
const TitleBar = styled.header`
  position: relative;
  display: flex;
  align-items: center;
  height: 28px;
  margin-left: -4px;
  padding-left: 4px;
  background: linear-gradient(90deg, #dceffa 0, #fdfeff 30px, #fff);
  overflow: hidden;
`;
const Backdrop = styled.svg`
  position: absolute;
  inset: 0;
  width: 100%;
  height: 100%;
`;
const AppTitle = styled.h1`
  position: relative;
  margin: 0 0 0 6px;
  font: 400 12px/20px ${TITLE};
`;
const WinButtons = styled.div`
  position: absolute;
  top: ${(p) => (p.$dialog ? 0 : -1)}px;
  right: ${(p) => (p.$dialog ? 5 : -18)}px;
  display: flex;
  height: 19px;
  border: 1px solid ${(p) => (p.$dialog ? "#4f6175" : "#7f8b96")};
  border-top: 0;
  border-radius: 0 0 5px 5px;
  overflow: hidden;
`;
const WinButton = styled.button`
  display: flex;
  align-items: center;
  justify-content: center;
  width: ${(p) => p.$w}px;
  padding: 0;
  border: 0;
  border-left: ${(p) => (p.$first ? 0 : 1)}px solid #8794a2;
  background: ${(p) => (p.$red ? "linear-gradient(#e3a596, #cf4b38 48%, #b82a18 52%, #d9694e)" : p.$glass ? "linear-gradient(#e6eef7, #b9cbe0 48%, #9fb6d1 52%, #c0d4ea)" : "#fff")};
`;
const WinGlyph = ({ kind }) => (
  <svg width="14" height="12" viewBox="0 0 14 12" aria-hidden="true">
    {kind === "min" && <rect x="1.500" y="6.500" width="11" height="4" rx="1" fill="#fff" stroke="#555f6b" />}
    {kind === "max" && <><rect x="1.500" y="1.500" width="11" height="9" rx="1" fill="#fff" stroke="#555f6b" /><rect x="4.500" y="4.500" width="5" height="3" fill="#cfd9e4" stroke="#555f6b" /></>}
    {kind === "close" && <path d="M1.500 1.500h3.500l2 2.500 2-2.500h3.500L9 6l3.500 4.500H9L7 8l-2 2.500H1.500L5 6z" fill="#fff" stroke="#555f6b" />}
  </svg>
);
const Body = styled.div`
  flex: 1;
  display: flex;
  flex-direction: column;
  background: #efefef;
  border: 1px solid #5c6670;
  border-width: 1px 0 1px 0;
  box-shadow: -1px 0 0 #7c8c9c;
`;
const MenuBar = styled.nav`
  display: flex;
  align-items: center;
  gap: 14px;
  height: 23px;
  padding: 2px 0 0 9px;
  border-bottom: 1px solid #b0b0b0;
`;
const MenuLink = styled.a`
  color: #000;
  text-decoration: none;
  white-space: nowrap;
`;
const Toolbar = styled.div`
  display: flex;
  align-items: center;
  height: 39px;
  padding-bottom: 1px;
  overflow: hidden;
  border-bottom: 1px solid #b0b0b0;
`;
const Chevrons = styled.button`
  flex: none;
  width: 18px;
  padding: 0;
  border: 0;
  background: none;
  font-size: 14px;
  font-weight: 700;
`;
const Gap = styled.span`
  flex: none;
  width: ${(p) => p.$w}px;
`;
const Workspace = styled.div`
  flex: 1;
  display: flex;
  align-items: stretch;
`;
const SideBar = styled.aside`
  display: flex;
  flex-direction: column;
  width: 52px;
  padding-top: 5px;
  border-right: 1px solid #b8b8b8;
`;
const SideGrip = styled.div`
  display: flex;
  justify-content: center;
  padding: ${(p) => p.$p || 0}px 0;
`;
const SideItem = styled.div`
  display: flex;
  align-items: center;
  height: 34px;
  padding-left: ${(p) => (p.$in ? 9 : 3)}px;
`;
const SideChevrons = styled(Chevrons)`
  width: 40px;
  margin-top: 18px;
  transform: rotate(90deg);
`;
const Docks = styled.div`
  display: flex;
  flex-direction: column;
  width: 330px;
  padding-bottom: 7px;
`;
const DockHead = styled.div`
  display: flex;
  align-items: center;
  gap: 6px;
  height: 19px;
  padding: 0 ${(p) => p.$pr}px 0 3px;
`;
const DockTitle = styled.h2`
  margin: 0;
  font-size: 10px;
  font-weight: 400;
`;
const DockButtons = styled.span`
  display: flex;
  gap: 1px;
`;
const DockButton = styled.button`
  display: flex;
  align-items: center;
  justify-content: center;
  width: 14px;
  height: 14px;
  padding: 0;
  border: 1px solid #666;
  border-radius: 3px;
  background: #f6f6f6;
`;
const DockGlyph = ({ close }) => (
  <svg width="10" height="10" viewBox="0 0 10 10" fill="none" stroke="#000" strokeWidth="1.500" aria-hidden="true">
    {close ? <path d="M1.500 1.500l7 7M8.500 1.500l-7 7" /> : <path d="M3.500 3V1.500h5v4H7M1.500 4h5v4.500h-5z" />}
  </svg>
);
const DockTools = styled.div`
  display: flex;
  align-items: center;
  height: 32px;
  padding-left: 2px;
`;
const Tree = styled.ul`
  flex: ${(p) => (p.$h ? "none" : 1)};
  height: ${(p) => (p.$h ? p.$h + "px" : "auto")};
  margin: 0;
  padding: 1px 0 0 4px;
  list-style: none;
  overflow: hidden;
  background: #fff;
  border: 2px solid #b4b4b4;
  border-right: 0;
`;
const TreeRow = styled.li`
  display: flex;
  align-items: center;
  height: ${(p) => (p.$sub ? 14 : 16)}px;
  margin-left: -4px;
  padding-left: 4px;
  white-space: nowrap;
  background: ${(p) => (p.$active ? "linear-gradient(90deg, #fff, #f0f0f0 40px)" : "none")};
`;
const Expander = styled.span`
  position: relative;
  flex: none;
  width: 19px;
  height: 100%;
  background: linear-gradient(#aaa 50%, transparent 50%) 6px 0 / 1px 2px repeat-y;
  &::after {
    content: "";
    position: absolute;
    left: 7px;
    right: 2px;
    top: 7px;
    border-top: 1px dotted #999;
  }
`;
const ExpandButton = styled.button`
  position: absolute;
  left: 2px;
  top: 3px;
  z-index: 1;
  width: 9px;
  height: 9px;
  padding: 0;
  border: 1px solid #888;
  background: linear-gradient(#444, #444) center / 5px 1px no-repeat,
    linear-gradient(#444, #444) center / ${(p) => (p.$open ? "0 0" : "1px 5px")} no-repeat, #fff;
`;
const Check = styled.input`
  appearance: none;
  flex: none;
  width: 13px;
  height: 13px;
  margin: 0;
  border: 1px solid #c4c4c4;
  border-radius: 2px;
  background: #fff;
  color: ${(p) => (p.$partial ? "#999" : "#000")};
  &:checked {
    background: linear-gradient(45deg, transparent 36%, currentColor 36%, currentColor 64%, transparent 64%) center / 8px 8px no-repeat,
      linear-gradient(-45deg, transparent 36%, currentColor 36%, currentColor 64%, transparent 64%) center / 8px 8px no-repeat, #fff;
  }
`;
const LayerLabel = styled.label`
  display: flex;
  align-items: center;
  gap: 6px;
  font-weight: ${(p) => (p.$bold ? 700 : 400)};
  span { text-decoration: ${(p) => (p.$active ? "underline" : "none")}; }
`;
const ItemText = styled.span`
  margin-left: 5px;
`;
const Splitter = styled.div`
  display: flex;
  align-items: center;
  justify-content: center;
  height: 6px;
  padding-right: 10px;
`;
const MapCanvas = styled.div`
  position: relative;
  flex: 1;
  margin: 2px 0 8px 3px;
  background: #55584e;
  overflow: hidden;
`;
const MapLabel = styled.span`
  position: relative;
  display: inline-block;
  margin: 2px 0 0 4px;
  padding: 0 3px 1px;
  font: 400 13px/16px ${UI};
  color: #fff;
  background: #5b766c;
`;
const RightDock = styled.div`
  width: 266px;
  padding-left: 6px;
`;
const FarDock = styled.div`
  width: 39px;
  padding: 4px 0 0 5px;
  border-left: 1px solid #bbb;
  overflow: hidden;
  background: linear-gradient(90deg, transparent 28px, #9a9a9a 32px) 0 34px no-repeat;
`;

/* ---------- status bar ---------- */

const StatusBar = styled.footer`
  display: flex;
  align-items: center;
  justify-content: flex-end;
  height: 21px;
  padding: 0 20px 2px 0;
  white-space: nowrap;
`;
const field = css`
  height: 18px;
  padding: 0 4px;
  border: 1px solid #b4b4b4;
  border-radius: 3px;
  background: #f6f6f6;
  outline: 0;
`;
const Field = styled.input`
  ${field}
  width: ${(p) => p.$w}px;
  text-align: ${(p) => (p.$center ? "center" : "left")};
`;
const Scale = styled.select`
  ${field}
  appearance: none;
  width: 86px;
  background: linear-gradient(#ccc, #ccc) 69px 0 / 1px 100% no-repeat,
    linear-gradient(45deg, transparent 50%, #000 50%) 73px 5px / 4px 4px no-repeat,
    linear-gradient(-45deg, transparent 50%, #000 50%) 77px 5px / 4px 4px no-repeat, #f6f6f6;
`;
const Spin = styled.span`
  display: flex;
  align-items: center;
`;
const SpinButtons = styled.span`
  display: flex;
  flex-direction: column;
  width: 16px;
  height: 18px;
  border: 1px solid #b4b4b4;
  border-left: 0;
  button {
    flex: 1;
    display: flex;
    align-items: center;
    justify-content: center;
    padding: 0;
    border: 0;
    background: #f4f4f4;
  }
`;
const StatusLabel = styled.label`
  margin: 0 5px 0 ${(p) => p.$ml || 0}px;
`;

/* ---------- attribute table window ---------- */

const Dialog = styled.section`
  position: absolute;
  left: 347px;
  right: 8px;
  top: 165px;
  bottom: 25px;
  z-index: 2;
  display: flex;
  flex-direction: column;
  padding: 0 5px 7px 5px;
  border: 1px solid #1c2733;
  border-radius: 8px 8px 6px 6px;
  background: linear-gradient(90deg, #b9d8f4, #b4d4f1 50%, #a4c8ea);
  box-shadow: inset 0 0 0 1px #dcecfa, 0 1px 14px 4px rgba(0, 0, 0, 0.6);
`;
const DialogTitle = styled.header`
  position: relative;
  display: flex;
  align-items: center;
  height: 27px;
  margin: 0 -5px;
  padding-left: 8px;
  border-radius: 7px 7px 0 0;
  overflow: hidden;
  h2 { position: relative; margin: 0 0 0 7px; font: 400 12px/20px ${TITLE}; white-space: nowrap; }
  > svg { position: relative; }
`;
const TitleGlass = styled.div`
  position: absolute;
  inset: 1px;
  background:
    radial-gradient(30px 26px at 120px 26px, #dbe6f0aa, transparent),
    radial-gradient(60px 20px at 380px 26px, #c9d6e2aa, transparent),
    radial-gradient(40px 16px at 560px 20px, #7f90a188, transparent),
    radial-gradient(14px 8px at 805px 4px, #8ba4bccc, transparent),
    radial-gradient(14px 8px at 835px 4px, #4f9ddbcc, transparent),
    radial-gradient(14px 8px at 865px 4px, #3586b4cc, transparent),
    radial-gradient(12px 8px at 897px 4px, #7cb0e4cc, transparent),
    linear-gradient(90deg, #b6d3ec 0, #c4d8ea 30px, #8fa5b7 60px, #a3b6c6 200px, #97a9ba 400px, #52667c 480px, #4d6077 560px, #62758a 640px, #4c6077 690px, #afcdec 704px, #b4d2f0);
`;
const Panel = styled.div`
  flex: 1;
  display: flex;
  flex-direction: column;
  min-height: 0;
  border: 1px solid #56728f;
  background: #efefef;
`;
const DialogTools = styled.div`
  display: flex;
  align-items: center;
  flex: none;
  height: 32px;
  padding: 0 0 3px 3px;
`;
const GridFrame = styled.div`
  flex: 1;
  display: grid;
  grid-template: minmax(0, 1fr) 16px / minmax(0, 1fr) 15px;
  min-height: 0;
  border: 2px solid #5294d6;
  margin: 0 0 0 1px;
`;
const GridView = styled.div`
  overflow: hidden;
  background: #fff;
`;
const Grid = styled.table`
  width: 100%;
  table-layout: fixed;
  border-collapse: separate;
  border-spacing: 0;
`;
const HeadCell = styled.th`
  height: 20px;
  padding: 2px 2px 0;
  overflow: hidden;
  white-space: nowrap;
  font-weight: 400;
  text-align: ${(p) => (p.$left ? "left" : "center")};
  border-right: 1px solid #888;
  border-bottom: 1px solid #888;
  background: linear-gradient(#fbfbfb, #e2e2e2);
  box-shadow: inset 1px 1px 0 #fff;
`;
const RowHead = styled.th`
  padding: 2px 3px 0;
  font-weight: 400;
  text-align: left;
  border-right: 1px solid #888;
  border-bottom: 1px solid #888;
  background: linear-gradient(90deg, #fbfbfb, #e2e2e2);
`;
const Cell = styled.td`
  height: 30px;
  padding: 1px 2px;
  vertical-align: top;
  overflow: hidden;
  white-space: nowrap;
  text-overflow: ${(p) => (p.$clip ? "clip" : "ellipsis")};
  text-align: ${(p) => (p.$right ? "right" : "left")};
  border-right: ${(p) => (p.$clip ? 0 : 1)}px solid #999;
  border-bottom: 1px solid #999;
  background: ${(p) => (p.$alt ? "#f4f4f4" : "#fff")};
  ${(p) => p.$current && css`box-shadow: inset 0 0 0 2px #34c77a;`}
`;
const SortMark = styled.svg`
  width: 12px;
  height: 8px;
  margin-left: 3px;
`;
const track = css`
  display: flex;
  background: repeating-conic-gradient(#fff 0 25%, #ececec 0 50%) 0 0 / 2px 2px;
`;
const VScroll = styled.div`
  ${track}
  flex-direction: column;
  border-left: 1px dotted #aaa;
`;
const HScroll = styled.div`
  ${track}
  border-top: 1px dotted #aaa;
`;
const ScrollButton = styled.button`
  display: flex;
  align-items: center;
  justify-content: center;
  flex: none;
  width: 15px;
  height: 15px;
  padding: 0;
  border: 1px solid #888;
  border-radius: 2px;
  background: linear-gradient(#fff, #eee);
`;
const Thumb = styled.span`
  display: flex;
  align-items: center;
  justify-content: center;
  flex: ${(p) => p.$f} 1 0;
  border: 1px solid #888;
  background: ${(p) => (p.$v ? "linear-gradient(90deg, #fff, #e4e4e4)" : "linear-gradient(#fff, #e4e4e4)")};
  &::before {
    content: "";
    width: ${(p) => (p.$v ? 11 : 19)}px;
    height: ${(p) => (p.$v ? 19 : 11)}px;
    background: radial-gradient(circle at 1px 1px, #aaa 1px, transparent 1px) 0 0 / 4px 4px;
  }
`;
const Rest = styled.span`
  flex: ${(p) => p.$f} 1 0;
`;
const Arrow = ({ d }) => {
  const paths = { up: "M1 6l3.500-4L8 6z", down: "M1 3l3.500 4L8 3z", left: "M6 1L2 4.500 6 8z", right: "M3 1l4 3.500L3 8z" };
  return <svg width="9" height="9" viewBox="0 0 9 9" aria-hidden="true"><path d={paths[d]} /></svg>;
};
const DialogFooter = styled.footer`
  display: flex;
  align-items: center;
  justify-content: space-between;
  flex: none;
  height: 27px;
  padding: 0 2px 0 3px;
`;
const FilterButton = styled.button`
  position: relative;
  display: flex;
  align-items: center;
  gap: 3px;
  width: 101px;
  height: 25px;
  padding: 0 6px;
  border: 1px solid #8c8c8c;
  border-radius: 3px;
  background: linear-gradient(#fff, #ececec);
  white-space: nowrap;
`;
const ViewButtons = styled.span`
  display: flex;
  gap: 1px;
`;
const ViewButton = styled(ToolButton)`
  border-color: #999;
  background: ${(p) => (p.$on ? "#d6d6d6" : "linear-gradient(#fff, #ececec)")};
`;
const Tooltip = styled.div`
  position: absolute;
  left: 756px;
  top: 98px;
  padding: 1px 5px 2px 1px;
  border: 1px solid #000;
  background: #ffffdc;
  box-shadow: 2px 2px 3px rgba(0, 0, 0, 0.5);
`;

/* ---------- data ---------- */

const menu = ["Проекты", "Правка", "Вид", "Слой", "Установки", "Модули", "Вектор", "Растр", "База данных", "Интернет", "Справка"];

/* entries: icon name; "-name" greyed, "+name" pressed, "|n" grip of n px, "v"/"-v" arrow, "." separator, "_n" gap */
const bar1 = "|12 newDoc open save saveAs composer composers |14 +touch hand pan zoomIn zoomOut -zoomOne zoomFull zoomSel zoomLayer -zoomLast -zoomNext bookNew book refresh |13 identify -action -v select v exprSelect v deselect table abacus sigma ruler v tip annot v |14 help |14 csvshp scatter . binoc".split(" ");
const bar2 = "|12 -pens pencil -savePen -addFeat -curve -v -moveFeat -node -trash -cut -copy -paste |13 label pie labelPin -labelPin2 -labelEye -labelMove -labelRot -labelEdit |14 plug id train dbDown -dbUp dbLeaf _8 |12 csw |14 python rings binocGear leafBox share » |14 +bigX _10 |14 greenMap |14 route".split(" ");
const bar3 = "pencil -editSheet -savePen refresh . -tableStar -trash . exprSelect rows invert deselect funnel moveTop panGrid zoomSel . -copy paste . -colAdd -colAdd abacus . cond".split(" ");
const dockBar1 = "addSel refresh funnel treeUp info".split(" ");
const dockBar2 = "brush groupAdd eye funnel epsFilter v treeDown treeUp remove".split(" ");
const side = [
  ["addVector"], ["addRaster"], ["feather"], ["elephant", "v"], ["wms", "v"], ["wcs"], ["wfs", "v"], ["comma"], ["virtual"],
  ["newVector", "v"], ["satStar", "in"], ["rasterAdd", "in"], ["globeAdd", "corner"], ["globeFind", "in"],
];

const sizes = { labelMove: 24, label: 22, pencil: 24, cut: 24, share: 24, bigX: 26, dbLeaf: 26, pie: 26, scatter: 20, labelPin: 25, leafBox: 26 };

const Tools = ({ items, size = 22, width = 35, height = 34, sepH }) =>
  items.map((raw, i) => {
    if (raw[0] === "|") return <GripV key={i} $w={+raw.slice(1)} />;
    if (raw[0] === "_") return <Gap key={i} $w={+raw.slice(1)} />;
    if (raw === ".") return <Separator key={i} $h={sepH} />;
    if (raw === "»") return <Chevrons key={i}>»</Chevrons>;
    if (raw === "v" || raw === "-v") return <ArrowButton key={i} aria-label="Меню"><Caret $dim={raw !== "v"} /></ArrowButton>;
    const dim = raw[0] === "-";
    const on = raw[0] === "+";
    const name = dim || on ? raw.slice(1) : raw;
    return (
      <ToolButton key={i} $w={width} $h={height} $on={on} aria-label={name}>
        <Icon n={name} s={size === 22 ? sizes[name] || 23 : size} dim={dim} />
        {(name === "pens" || name === "eye") && <CornerCaret $s={3} $dim={dim} />}
      </ToolButton>
    );
  });

const catalog = [
  ["folder", "Каталог проекта"], ["folder", "Домашний каталог"], ["starOff", "Избранное"],
  ["folder", "C:/"], ["folder", "D:/"], ["folder", "E:/"], ["folder", "F:/"], ["folder", ""],
];
const layers = [
  { t: "2016-12-22 Дороги к СНТ КМР1", i: "greenLine", on: 1, b: 1, active: 1 },
  { t: "2016-12-22 Муниципальные дороги КМР", i: "line", on: 1, b: 1 },
  { t: "Инвентаризация", i: "group", on: 1, partial: 1, x: 1 },
  { t: "Региональные и федеральные дороги", i: "vnodes", b: 1, x: 1 },
  { t: "Границы поселений и района", i: "polygon", b: 1, x: 1 },
  { t: "2016-11-27 СНТ", i: "points", on: 1, b: 1, x: 1 },
  { t: "Населенные пункты", i: "points", on: 1, b: 1, x: 1 },
  { t: "Кадастровое деление ПКК5 ЗУ", i: "checker", b: 1, x: 1, open: 1 },
  { sub: 1, i: "redBox" },
  { t: "Кадастровое деление ПКК5 Квартал", i: "checker", b: 1, x: 1 },
  { t: "Дороги", i: "grayTable", b: 1, bare: 1 },
  { t: "Спутник Яндекс - s17", i: "checker", b: 1 },
  { t: "Яндекс-спутник офлайн", i: "group", on: 1, x: 1 },
];

const columns = [
  ["gid", 50], ["name", 126], ["Layer", 39], ["ar", 35], ["list_posel", 100], ["st_v_nas", 50], ["list_naspu", 100],
  ["list_stree", 77], ["len", 41], ["t_wid", 33], ["area", 56], ["list_pokr", 100], ["list_comme", 100], ["", 0],
];
const rows = [
  [9, "5044 ...", 5044, "Заруденское с.п.", "нет", "с.Октябрьское", 886, "3", 2658, "Молния", "38.952"],
  [10, "5045 ...", 5045, "Заруденское с.п.", "нет", "с.Пирочи", 2226, "3", 6678, "Березка", "38.947"],
  [34, "7008 ...", 7008, "Пестриковское", "нет", "с.Пестриково", 3585, "3", 10755, "Взлет", "38.909"],
  [38, "603 в...", 603, "Хорошовское с.п.", "да", "д.Новоселки", 542, "3,5", 1897, "Ягодное", "38.799"],
  [101, "353 в...", 353, "Акатьевское с.п.", "да", "д.Змеево", 558, "3,5", 1953, "Лен", "38.686"],
  [173, "3037 ...", 3037, "Акатьевское с.п.", "нет", "с.Васильево", 1624, "3", 4872, "Лукоморье", "38.736"],
  [183, "6008 ...", 6008, "Хорошовское с.п.", "нет", "с.Чанки", 3819, "3", 11457, "Замоскво...", "38.842"],
  [185, "6012 ...", 6012, "Хорошовское с.п.", "нет", "д.Рождественка", 862, "3", 2586, "Полет-1", "38.839"],
  [186, "6011 ...", 6011, "Хорошовское с.п.", "нет", "д.Паньшино", 656, "3", 1968, "Звезда", "38.814"],
  [188, "6014 ...", 6014, "Хорошовское с.п.", "нет", "д.Чуркино", 681, "3", 2043, "Пчелка", "38.838"],
  [190, "6015 ...", 6015, "Хорошовское с.п.", "нет", "д.Елино", 193, "3", 579, "Гранит", "38.763"],
  [191, "6017 ...", 6017, "Хорошовское с.п.", "нет", "д.Новоселки", 969, "3", 2907, "Новоселки", "38.799"],
  [233, "8007 ...", 8007, "Радужное с.п.", "нет", "с.Никульское", 820, "3", 2460, "Звезда", "38.678"],
  [293, "4004 ...", 4004, "Проводниковск...", "нет", "д.Подберезники", 2161, "3", 6483, "Аист", "38.478"],
  [327, "4014 ...", 4014, "Проводниковск...", "нет", "п.Проводник", 1141, "3", 3423, "Ручеек", "38.607"],
];

const Satmap = () => (
  <Backdrop preserveAspectRatio="none" aria-hidden="true">
    <filter id="terrain" x="0" y="0" width="100%" height="100%" colorInterpolationFilters="sRGB">
      <feTurbulence type="fractalNoise" baseFrequency="0.03 0.045" numOctaves="6" seed="11" />
      <feColorMatrix values="1.300 0 0 0 -.26  1.200 .06 0 0 -.24  1.100 0 .06 0 -.24  0 0 0 0 1" />
    </filter>
    <rect width="100%" height="100%" filter="url(#terrain)" />
    <rect width="52" height="60" fill="#3f5d52" opacity=".8" />
    <ellipse cx="118" cy="20" rx="26" ry="16" fill="#a8977c" opacity=".35" />
    <ellipse cx="215" cy="18" rx="34" ry="18" fill="#a8977c" opacity=".35" />
    <ellipse cx="315" cy="8" rx="30" ry="10" fill="#c0a88c" opacity=".35" />
    <ellipse cx="440" cy="14" rx="22" ry="16" fill="#b89c84" opacity=".4" />
    <rect x="480" width="180" height="60" fill="#3c4246" opacity=".4" />
    <path d="M48 40L82 0" stroke="#8d9c93" strokeWidth="6" opacity=".7" />
    <path d="M255 40L300 0" stroke="#8d9085" strokeWidth="3" opacity=".6" />
    <path d="M0 21l53 4" stroke="#cfe4ff" strokeWidth="1.500" />
    <circle cx="390" cy="8" r="4" fill="#eee" opacity=".8" />
  </Backdrop>
);

const TitleBlur = () => (
  <Backdrop aria-hidden="true">
    <filter id="soft" x="-30%" y="-60%" width="160%" height="220%"><feGaussianBlur stdDeviation="4" /></filter>
    <g filter="url(#soft)">
      {[[198, 8, "#a9cdf5"], [340, 9, "#8393b8"], [362, 9, "#7f8db0"], [393, 9, "#b5bdf0"], [425, 8, "#9ab3dd"]].map(([x, y, c]) => <circle key={x} cx={x} cy={y} r="7" fill={c} />)}
      {[[455, 56, "#9fadc8"], [530, 54, "#9fadc8"], [602, 54, "#9cc6f6"], [674, 54, "#a6d3fb"], [816, 54, "#c3ecfb"], [888, 56, "#d5f2fb"], [962, 52, "#98aecd"], [1034, 54, "#a8d4f8"], [1104, 54, "#7787a4"], [1280, 46, "#b9dcf6"]].map(([x, w, c]) => <rect key={x} x={x} y="12" width={w} height="7" fill={c} />)}
      <path d="M746 22l12-20 12 20M776 20h10v-8h-8M792 4v18h8l6-6z" stroke="#8fa8d6" strokeWidth="4" fill="none" />
      <path d="M1205 4l14 4 6 14" stroke="#9aa4f2" strokeWidth="10" fill="none" />
    </g>
  </Backdrop>
);

function DockHeader({ title, pr = 4 }) {
  return (
    <DockHead $pr={pr}>
      <GripH />
      <DockTitle>{title}</DockTitle>
      <GripH />
      <DockButtons>
        <DockButton aria-label="Открепить"><DockGlyph /></DockButton>
        <DockButton aria-label="Закрыть панель"><DockGlyph close /></DockButton>
      </DockButtons>
    </DockHead>
  );
}

function SpinField({ id, value, w }) {
  return (
    <Spin>
      <Field id={id} defaultValue={value} $w={w} />
      <SpinButtons>
        <button aria-label="Больше"><Arrow d="up" /></button>
        <button aria-label="Меньше"><Arrow d="down" /></button>
      </SpinButtons>
    </Spin>
  );
}

function AttributeTable() {
  return (
    <Dialog aria-label="Таблица атрибутов">
      <DialogTitle>
        <TitleGlass />
        <Icon n="app" s={16} />
        <h2>2016-12-22 Дороги к СНТ КМР1 :: Features total: 37, filtered: 37, selected: 0</h2>
        <WinButtons $dialog>
          <WinButton $w={27} $glass $first aria-label="Свернуть"><WinGlyph kind="min" /></WinButton>
          <WinButton $w={26} $glass aria-label="Развернуть"><WinGlyph kind="max" /></WinButton>
          <WinButton $w={46} $red aria-label="Закрыть"><WinGlyph kind="close" /></WinButton>
        </WinButtons>
      </DialogTitle>
      <Panel>
        <DialogTools><Tools items={bar3} size={16} width={27} height={26} sepH={22} /></DialogTools>
        <GridFrame>
          <GridView>
            <Grid>
              <colgroup>
                <col width="21" />
                {columns.map(([n, w]) => <col key={n} width={w || undefined} />)}
              </colgroup>
              <thead>
                <tr>
                  <HeadCell />
                  {columns.map(([n]) => (
                    <HeadCell key={n} $left={n === "ar" || n === "st_v_nas"}>
                      {n}
                      {n === "ar" && <SortMark viewBox="0 0 12 8"><path d="M6 0l6 8H0" fill="#f8f8f8" stroke="#fff" /><path d="M6 0L0 8" stroke="#999" /></SortMark>}
                    </HeadCell>
                  ))}
                </tr>
              </thead>
              <tbody>
                {rows.map((r, i) => {
                  const alt = i % 2 === 1;
                  const cells = [`Автодорога № ${r[1]}`, r[2], "", r[3], r[4], r[5], "нет", r[6], r[7], r[8], "грунтовое", `к СНТ ${r[9]}`];
                  return (
                    <tr key={r[0]}>
                      <RowHead>{i + 1}</RowHead>
                      <Cell $right $alt={alt} $current={i === 0}>{r[0]}</Cell>
                      {cells.map((c, k) => <Cell key={k} $alt={alt}>{c}</Cell>)}
                      <Cell $clip $alt={alt}>{r[10]}</Cell>
                    </tr>
                  );
                })}
              </tbody>
            </Grid>
          </GridView>
          <VScroll>
            <ScrollButton aria-label="Вверх"><Arrow d="up" /></ScrollButton>
            <Thumb $v $f={155} />
            <Rest $f={258} />
            <ScrollButton aria-label="Вверх"><Arrow d="up" /></ScrollButton>
            <ScrollButton aria-label="Вниз"><Arrow d="down" /></ScrollButton>
          </VScroll>
          <HScroll>
            <ScrollButton aria-label="Влево"><Arrow d="left" /></ScrollButton>
            <Thumb $f={592} />
            <Rest $f={325} />
            <ScrollButton aria-label="Влево"><Arrow d="left" /></ScrollButton>
            <ScrollButton aria-label="Вправо"><Arrow d="right" /></ScrollButton>
          </HScroll>
        </GridFrame>
        <DialogFooter>
          <FilterButton><Icon n="funnel" s={15} />Все объекты<CornerCaret $s={3} /></FilterButton>
          <ViewButtons>
            <ViewButton $w={25} $h={25} aria-label="Форма"><Icon n="form" s={14} /></ViewButton>
            <ViewButton $w={25} $h={25} $on aria-label="Таблица"><Icon n="table" s={14} /></ViewButton>
          </ViewButtons>
        </DialogFooter>
      </Panel>
      <Tooltip role="tooltip">list_pokr</Tooltip>
    </Dialog>
  );
}

export default function App() {
  return (
    <>
      <Global />
      <Frame>
        <TitleBar>
          <TitleBlur />
          <Icon n="app" s={16} />
          <AppTitle>QGIS2.18.1 - ГИС дороги КМР</AppTitle>
          <WinButtons>
            <WinButton $w={28} $first aria-label="Свернуть"><WinGlyph kind="min" /></WinButton>
            <WinButton $w={27} aria-label="Развернуть"><WinGlyph kind="max" /></WinButton>
            <WinButton $w={48} aria-label="Закрыть"><WinGlyph kind="close" /></WinButton>
          </WinButtons>
        </TitleBar>
        <Body>
          <MenuBar>{menu.map((m) => <MenuLink key={m} href="#">{m}</MenuLink>)}</MenuBar>
          <Toolbar><Tools items={bar1} /></Toolbar>
          <Toolbar><Tools items={bar2} /></Toolbar>
          <Workspace>
            <SideBar>
              <SideGrip><GripH $w={42} /></SideGrip>
              {side.map(([n, mode], i) => (
                <SideItem key={i} $in={mode === "in"}>
                  <ToolButton $w={34} $h={30} aria-label={n}><Icon n={n} />{mode === "corner" && <CornerCaret $s={3} />}</ToolButton>
                  {mode === "v" && <ArrowButton aria-label="Меню"><Caret /></ArrowButton>}
                </SideItem>
              ))}
              <SideGrip $p={4}><GripH $w={42} /></SideGrip>
              <SideItem $in><ToolButton $w={34} $h={30} aria-label="cross"><Icon n="cross" /></ToolButton></SideItem>
              <SideItem $in><ToolButton $w={34} $h={30} aria-label="sat"><Icon n="sat" /></ToolButton></SideItem>
              <SideChevrons>»</SideChevrons>
            </SideBar>
            <Docks>
              <DockHeader title="Каталог" />
              <DockTools><Tools items={dockBar1} size={16} width={27} height={26} /></DockTools>
              <Tree $h={118}>
                {catalog.map(([icon, t], i) => (
                  <TreeRow key={i}>
                    <Expander>{icon === "folder" && <ExpandButton aria-label="Развернуть" />}</Expander>
                    <Icon n={icon} s={16} />
                    <ItemText>{t}</ItemText>
                  </TreeRow>
                ))}
              </Tree>
              <Splitter><GripH $w={104} /></Splitter>
              <DockHeader title="Панель слоёв" />
              <DockTools><Tools items={dockBar2} size={16} width={27} height={26} /></DockTools>
              <Tree>
                {layers.map((l, i) => (
                  <TreeRow key={i} $active={l.active} $sub={l.sub}>
                    <Expander>{l.x && <ExpandButton $open={l.open} aria-label="Развернуть" />}</Expander>
                    {l.sub ? <><Gap $w={20} /><Icon n={l.i} s={14} /></> : l.bare ? (
                      <LayerLabel as="span" $bold><Icon n={l.i} s={14} /><span>{l.t}</span></LayerLabel>
                    ) : (
                      <LayerLabel $bold={l.b} $active={l.active}>
                        <Check type="checkbox" defaultChecked={!!l.on} $partial={l.partial} />
                        <Icon n={l.i} s={16} />
                        <span>{l.t}</span>
                      </LayerLabel>
                    )}
                  </TreeRow>
                ))}
              </Tree>
            </Docks>
            <MapCanvas><Satmap /><MapLabel>5036-3</MapLabel></MapCanvas>
            <RightDock>
              <DockHeader title="Ресурсы NextGIS" pr={1} />
              <DockTools><Tools items={["|12", "-pencil", "identify", ".", "open", "refresh", ".", "-table", ".", "info"]} size={16} width={31} height={26} sepH={22} /></DockTools>
            </RightDock>
            <FarDock><GripH $w={42} as="div" /><Icon n="setSquare" s={24} /></FarDock>
          </Workspace>
          <StatusBar>
            <StatusLabel htmlFor="coords">Координаты</StatusLabel>
            <Field id="coords" $w={109} $center defaultValue="2288261,397755" />
            <Gap $w={6} /><Icon n="mouse" s={14} />
            <StatusLabel htmlFor="scale" $ml={14}>Масштаб</StatusLabel>
            <Scale id="scale" defaultValue="a"><option value="a">1:4 549</option></Scale>
            <Gap $w={6} /><Icon n="lock" s={13} />
            <StatusLabel htmlFor="mag" $ml={14}>Magnifier</StatusLabel>
            <SpinField id="mag" value="100%" w={59} />
            <StatusLabel htmlFor="rot" $ml={8}>Вращение</StatusLabel>
            <SpinField id="rot" value="0,0" w={60} />
            <Gap $w={7} />
            <Check id="draw" type="checkbox" defaultChecked />
            <StatusLabel htmlFor="draw" $ml={5}>Отрисовка</StatusLabel>
            <Gap $w={13} /><Icon n="crs" s={15} />
            <StatusLabel as="span" $ml={3}>USER:100000 (OTF)</StatusLabel>
            <Gap $w={18} /><Icon n="chat" s={16} />
          </StatusBar>
        </Body>
        <AttributeTable />
      </Frame>
    </>
  );
}
